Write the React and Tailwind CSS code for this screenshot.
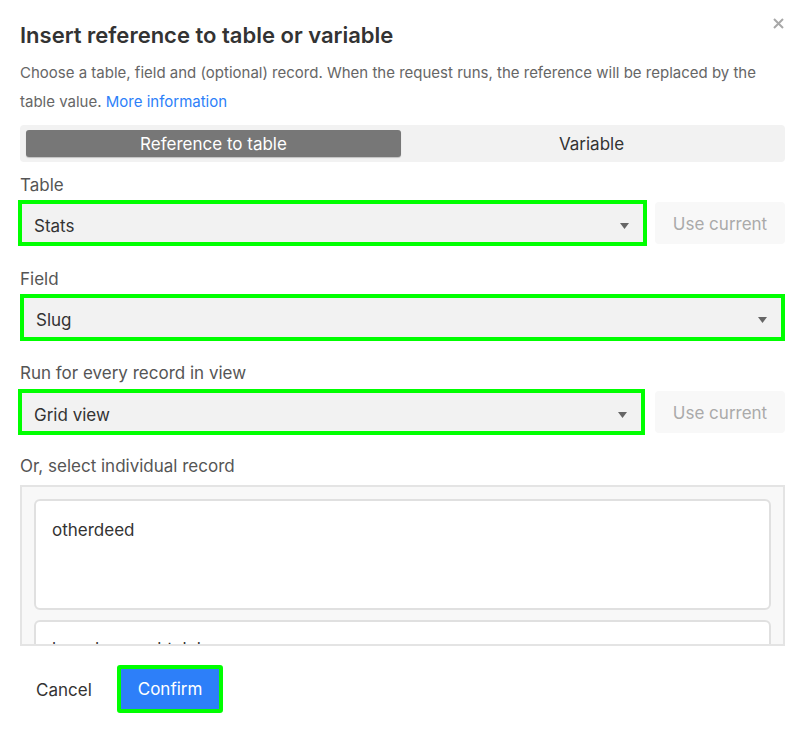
import React from 'react';

const Caret = () => (
  <svg width="9" height="6" viewBox="0 0 9 6" className="shrink-0">
    <path d="M0 0 H9 L4.5 6 Z" fill="#666" />
  </svg>
);

const Select = ({ value, className = '' }) => (
  <div className={`flex items-center justify-between h-[46px] border-4 border-[#00ff00] bg-[#f2f2f2] pl-3 pr-[14px] pt-[5px] ${className}`}>
    <span className="text-[17px] leading-[22px] text-[#333]">{value}</span>
    <Caret />
  </div>
);

const UseCurrent = () => (
  <button className="w-[130px] h-[42px] shrink-0 rounded-[4px] bg-[#f8f8f8] pt-[4px] text-[17px] text-[#aaa]">
    Use current
  </button>
);

const Label = ({ children }) => (
  <div className="text-[17px] leading-[22px] text-[#555]">{children}</div>
);

export default function App() {
  return (
    <div className="relative w-[800px] h-[729px] bg-white overflow-hidden" style={{ fontFamily: 'Inter, "Liberation Sans", sans-serif' }}>
      {/* close */}
      <button className="absolute top-[18px] right-[16px] p-0">
        <svg width="11" height="11" viewBox="0 0 11 11">
          <path d="M1 1 L10 10 M10 1 L1 10" stroke="#a8a8a8" strokeWidth="2" />
        </svg>
      </button>

      <div className="pl-5 pr-[15px] pt-[21px]">
        <h2 className="text-[22px] leading-[28px] font-semibold text-[#333]">Insert reference to table or variable</h2>
        <p className="mt-[9px] text-[15px] leading-[29px] text-[#666] pr-6">
          Choose a table, field and (optional) record. When the request runs, the reference will be replaced by the table value.{' '}
          <a className="text-[#2d7ff9]">More information</a>
        </p>

        {/* tabs */}
        <div className="mt-[9px] h-[37px] flex items-center gap-[3px] rounded-[4px] bg-[#f2f2f2] px-[6px]">
          <div className="flex-1 h-[27px] rounded-[3px] bg-[#777] pt-[2px] text-white text-[17px] flex items-center justify-center shadow-[0_1px_1px_rgba(0,0,0,0.2)]">
            Reference to table
          </div>
          <div className="flex-1 h-[27px] pt-[2px] text-[#333] text-[17px] flex items-center justify-center">
            Variable
          </div>
        </div>

        <div className="mt-3">
          <Label>Table</Label>
          <div className="mt-[4px] flex items-center gap-2">
            <Select value="Stats" className="flex-1 -ml-[2px]" />
            <UseCurrent />
          </div>
        </div>

        <div className="mt-[22px]">
          <Label>Field</Label>
          <Select value="Slug" className="mt-[4px] h-[47px]" />
        </div>

        <div className="mt-[21px]">
          <Label>Run for every record in view</Label>
          <div className="mt-[5px] flex items-center gap-[10px]">
            <Select value="Grid view" className="flex-1 -ml-[2px]" />
            <UseCurrent />
          </div>
        </div>

        <div className="mt-5">
          <Label>Or, select individual record</Label>
          <div className="mt-2 h-[161px] overflow-hidden border-2 border-[#e4e4e4] bg-[#f8f8f8] px-3 pt-3 flex flex-col gap-[10px]">
            <div className="h-[111px] shrink-0 rounded-[6px] border-2 border-[#e0e0e0] bg-white px-4 pt-[17px]">
              <span className="text-[17px] leading-[22px] text-[#333]">otherdeed</span>
            </div>
            <div className="h-[111px] shrink-0 rounded-[6px] border-2 border-[#e0e0e0] bg-white px-4 pt-[15px]">
              <span className="text-[17px] leading-[22px] text-[#333]">boredapeyachtclub</span>
            </div>
          </div>
        </div>

        <div className="mt-[19px] flex items-center gap-[9px]">
          <button className="h-[48px] px-4 pt-[4px] text-[17px] text-[#333]">Cancel</button>
          <button className="h-[48px] px-[17px] pt-[2px] rounded-[3px] border-4 border-[#00ff00] bg-[#2d7ff9] text-[17px] text-white">
            Confirm
          </button>
        </div>
      </div>
    </div>
  );
}
